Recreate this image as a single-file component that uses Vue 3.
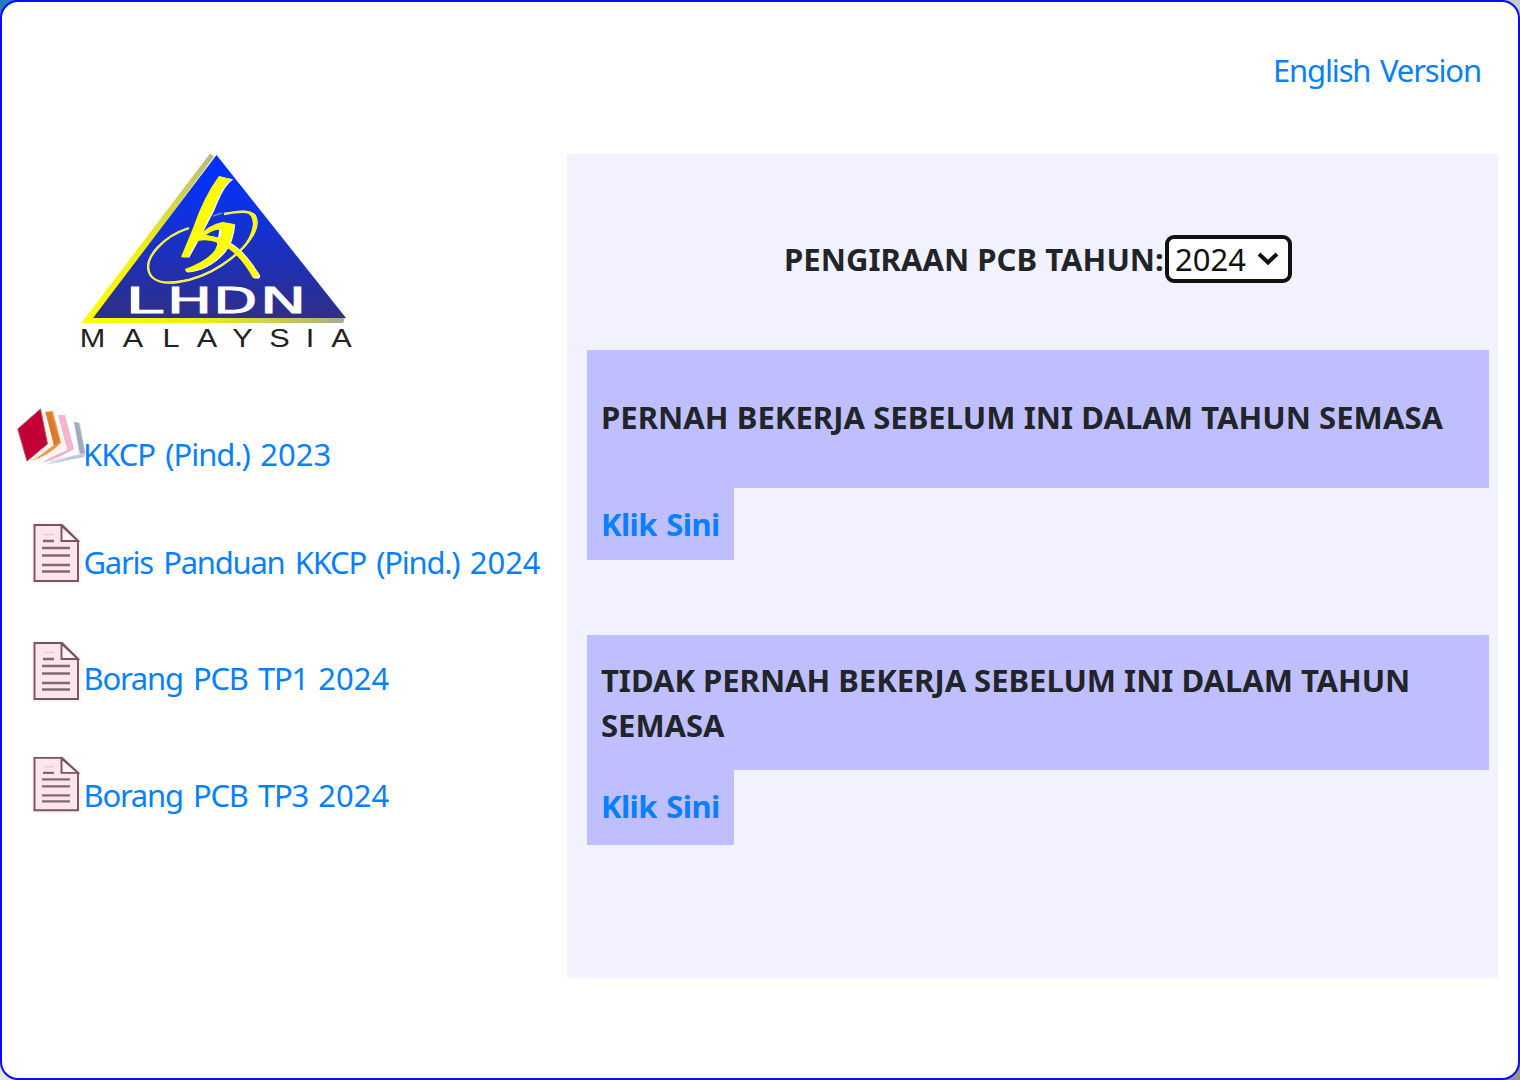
<script setup>
const documents = [
  { label: 'KKCP (Pind.) 2023', icon: 'books', name: 'kkcp' },
  { label: 'Garis Panduan KKCP (Pind.) 2024', icon: 'page', name: 'guide' },
  { label: 'Borang PCB TP1 2024', icon: 'page', name: 'tp1' },
  { label: 'Borang PCB TP3 2024', icon: 'page', name: 'tp3' },
]
const choices = [
  { title: 'PERNAH BEKERJA SEBELUM INI DALAM TAHUN SEMASA', name: 'previous' },
  { title: 'TIDAK PERNAH BEKERJA SEBELUM INI DALAM TAHUN SEMASA', name: 'first' },
]
const initials = [
  { char: 'L', x: 55, stretch: 1.95 },
  { char: 'H', x: 96.5, stretch: 1.75 },
  { char: 'D', x: 143, stretch: 1.65 },
  { char: 'N', x: 189.5, stretch: 1.8 },
]
const letterCenters = [22.5, 63, 101, 137, 172.5, 209.5, 240, 271.5]
const nameOf = (label) => label.slice(0, -4)
const yearOf = (label) => label.slice(-4)
</script>

<template>
  <div class="frame">
    <main class="card">
      <header class="top"><a class="english">English Version</a></header>
      <div class="columns">
        <aside class="side">
          <svg class="logo" viewBox="0 0 295 210" width="295" height="210">
            <defs>
              <linearGradient id="blue" x1="0" y1="0" x2="0" y2="1">
                <stop offset="0" stop-color="#0030ff" /><stop offset=".25" stop-color="#0a32ed" /><stop offset="1" stop-color="#302e87" />
              </linearGradient>
              <linearGradient id="edge" x1="0" y1="1" x2="0" y2="0">
                <stop offset="0" stop-color="#ff0" /><stop offset=".45" stop-color="#eeee18" /><stop offset="1" stop-color="#b9b981" />
              </linearGradient>
              <linearGradient id="base" x1="0" y1="0" x2="1" y2="0">
                <stop offset="0" stop-color="#ff0" /><stop offset=".5" stop-color="#eaea18" /><stop offset="1" stop-color="#aaa990" />
              </linearGradient>
            </defs>
            <path d="M140 8.500L144 11.500L25 173L11.500 178Z" fill="url(#edge)" />
            <path d="M11.500 178L23 172.500H275L273 178Z" fill="url(#base)" />
            <path d="M146.500 10L276 173H23Z" fill="url(#blue)" />
            <g fill="#fff" transform="translate(1.300 .6)">
              <path d="M149 31Q156 33 162 34C153 40 148 53 143 65L129 92L118 112H111L123 83Q134 51 149 31Z" />
              <path d="M149 77L164 79Q162 98 154 107C143 119 131 126 116 127L115 124Q137 116 145 105Z" />
              <path d="M136 90C164 93 176 110 189 130L188 133H183C173 115 158 96 136 94Z" />
            </g>
            <path d="M119 83C94 91 74 112 79 127C85 145 125 138 152 120C179 102 191 82 185 71C180 64 164 67 154 69" fill="none" stroke="#ffffc8" stroke-width="2.300" />
            <path d="M119 83C94 91 74 112 79 127C85 145 125 138 152 120C179 102 191 82 185 71C180 64 164 67 154 69" fill="none" stroke="#f4ef16" stroke-width="1.500" />
            <path d="M173 66Q192 67 183 89Q179 98 169 108Q182 91 183 79Q183 69 173 66Z" fill="#ff0" />
            <path d="M152 68L143 71" stroke="#8586a0" stroke-width="1.500" />
            <g fill="#ff0">
              <path d="M149 31Q156 33 162 34C153 40 148 53 143 65L129 92L118 112H111L123 83Q134 51 149 31Z" />
              <path fill-rule="evenodd" d="M128 92Q139 79 153 77L164 79Q162 98 154 107C143 119 131 126 116 127L115 124Q137 116 145 105L148 98Q139 94 128 96ZM136 90L149 93L152 85Q144 84 136 90Z" />
              <path d="M132 90C161 92 175 109 189 130L188 132L183 133C173 115 158 96 132 94Z" />
            </g>
            <text v-for="letter in initials" :key="letter.char" :transform="`translate(${letter.x} 167.500) scale(${letter.stretch} 1)`" class="logo-name">{{ letter.char }}</text>
            <text v-for="(letter, i) in 'MALAYSIA'" :key="i" :transform="`translate(${letterCenters[i]} 202.300) scale(1.18 1)`" class="logo-country" text-anchor="middle">{{ letter }}</text>
          </svg>
          <nav>
            <a v-for="item in documents" :key="item.name" class="doc" :class="item.name">
              <svg v-if="item.icon === 'books'" class="icon books" viewBox="0 0 75 65" width="75" height="65">
                <path d="M57 14L63 15L69 47Q55 52 29 57L35 52L62 46Z" fill="#dce2ea" />
                <path d="M57 14L62 15L68 45L63 46Z" fill="#a0abc0" />
                <path d="M57 48L68 46L67 49L35 55Z" fill="#b9c4d4" />
                <path d="M50 12L60 43L43 50L54 43Z" fill="#f7fbff" />
                <path d="M41 7L48 7L57 41Q43 50 25 55L32 50L50 42Z" fill="#f1b5cf" />
                <path d="M38 11L50 40L28 51L43 39Z" fill="#fff4ed" />
                <path d="M28 4L36 3L44 35Q33 47 14 53L24 46L37 37Z" fill="#eb9850" />
                <path d="M29 4L34 4L43 34L37 38Z" fill="#df7929" />
                <path d="M26 3L35 37Q25 48 12 54L31 38Z" fill="#fff2dc" />
                <path d="M23.500 1L30.500 36L10 53L.8 21Z" fill="#c30035" stroke="#b54b67" />
              </svg>
              <svg v-else class="icon page" viewBox="0 0 50 62" width="50" height="62" preserveAspectRatio="none">
                <path d="M0 0H32L49 16V61H0Z" fill="#fff0f3" opacity=".8" />
                <path d="M2.500 2H30L46 18V58H2.500Z" fill="#fde5eb" stroke="#79545f" stroke-width="1.900" />
                <path d="M29.500 3V18H46L30 3Z" fill="#fff5f7" stroke="#79545f" stroke-width="1.900" />
                <path d="M11 18H22M10 25H38M10 32.500H38M10 42H38M10 48.500H38" fill="none" stroke="#826872" stroke-width="2.400" />
                <path d="M12 11.500H22" stroke="#e5ccd2" stroke-width="1.500" />
              </svg>
              <span class="label"><span class="name">{{ nameOf(item.label) }}</span>{{ yearOf(item.label) }}</span>
            </a>
          </nav>
        </aside>
        <section class="panel">
          <div class="year">
            <strong>PENGIRAAN PCB TAHUN:</strong>
            <button class="select"><span>2024</span>
              <svg width="22" height="16" viewBox="0 0 22 16"><path d="M2 3L11 11.500L20 3" fill="none" stroke="#111" stroke-width="4" /></svg>
            </button>
          </div>
          <article v-for="choice in choices" :key="choice.name" :class="choice.name">
            <h2>{{ choice.title }}</h2>
            <a class="click">Klik Sini</a>
          </article>
        </section>
      </div>
    </main>
  </div>
</template>

<style>
body { margin: 0; overflow: hidden; }
</style>
<style scoped>
* { box-sizing: border-box; }
.frame { width: 1520px; height: 1080px; background: conic-gradient(#c3cfcb 0 25%, #929292 0 50%, #e5e5e5 0 75%, #287ac0 0); font: 31px/45px "Noto Sans", sans-serif; color: #212529; }
.card { height: 1080px; border: 2px solid #0b0bf5; border-radius: 18px; background: #fff; }
a { color: #087fff; text-decoration: none; white-space: nowrap; }
.top { height: 152px; padding: 46px 37px 0 0; display: flex; justify-content: flex-end; }
.english { letter-spacing: -1.150px; word-spacing: 2.750px; }
.columns { display: flex; }
.side { width: 565px; flex: none; }
.logo { display: block; margin: -9px 0 0 68px; }
.logo-name { font: 35px "DejaVu Sans", sans-serif; fill: #fff; stroke: #fff; stroke-width: .8px; }
.logo-country { font: 26px "Liberation Sans", sans-serif; fill: #222; }
nav { display: flex; flex-direction: column; padding-top: 53px; }
.doc { display: flex; height: 116px; }
.doc.kkcp { height: 115px; padding-left: 15px; }
.doc.guide, .doc.tp1, .doc.tp3 { padding-left: 30px; }
.doc.guide { height: 118px; }
.icon { flex: none; }
.books { margin-right: -9px; }
.page { margin-right: 1.500px; }
.label { margin-top: 16px; }
.name { white-space: pre; letter-spacing: -1.250px; word-spacing: 3.500px; }
.kkcp .label { margin-top: 24px; }
.kkcp .name { letter-spacing: -1.060px; }
.guide .label { margin-top: 17px; }
.tp1 .label { margin-top: 15px; }
.tp3 .page { height: 58px; margin-top: -1px; }
.panel { width: 931px; height: 824px; background: #f1f1ff; padding: 81px 9px 0 20px; }
.year { display: flex; height: 115px; padding-left: 197px; }
.year strong { white-space: nowrap; width: 381px; margin-top: 2px; letter-spacing: .050px; }
.select { flex: none; width: 127px; height: 48px; background: #fff; border: 4px solid #111; border-radius: 9px; padding: 0 9px 0 6px; font: inherit; color: #111; display: flex; align-items: center; justify-content: space-between; }
h2 { margin: 0; font: inherit; font-weight: bold; letter-spacing: .050px; background: #bfbfff; padding: 45px 14px 0; height: 138px; white-space: nowrap; }
.first h2 { height: 135px; padding-top: 23px; letter-spacing: -.020px; white-space: normal; }
.click { display: block; font-weight: bold; letter-spacing: -.600px; word-spacing: 2px; width: 147px; height: 72px; background: #bfbfff; padding: 14px; }
.previous { height: 285px; }
.first .click { height: 75px; }
</style>
